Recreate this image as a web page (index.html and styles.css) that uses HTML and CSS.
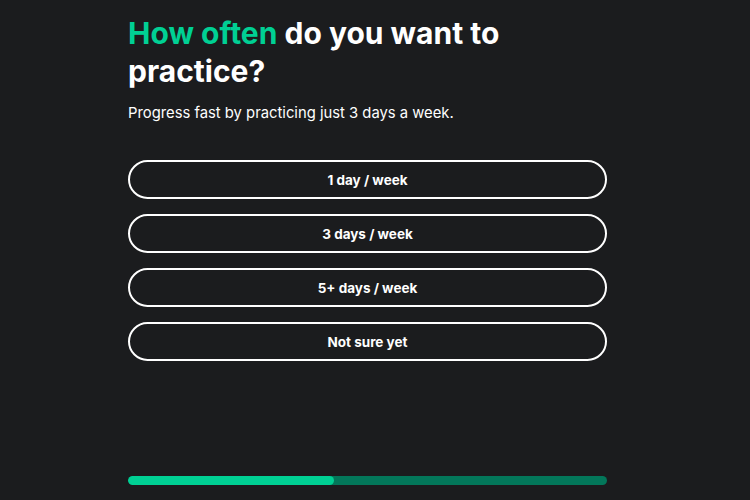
FILE: index.html
```html
<!DOCTYPE html>
<html lang="en">
<head>
<meta charset="utf-8">
<title>How often</title>
<link rel="stylesheet" href="styles.css">
</head>
<body>
<main class="page">
  <h1 class="title"><span class="accent">How often</span> do you want to practice?</h1>
  <p class="subtitle">Progress fast by practicing just 3 days a week.</p>
  <div class="options">
    <button class="option">1 day / week</button>
    <button class="option">3 days / week</button>
    <button class="option">5+ days / week</button>
    <button class="option">Not sure yet</button>
  </div>
  <div class="progress"><div class="progress-fill" style="width: 43%"></div></div>
</main>
</body>
</html>
```
FILE: styles.css
```css
html, body {
  margin: 0;
  padding: 0;
  background: #1b1c1e;
  height: 100%;
}
body {
  font-family: Inter, "Noto Sans", sans-serif;
  color: #ffffff;
}
.page {
  width: 479px;
  margin-left: 128px;
  padding-top: 14px;
  display: flex;
  flex-direction: column;
  height: 500px;
  box-sizing: border-box;
}
.title {
  margin: 0;
  font-size: 30px;
  line-height: 38px;
  font-weight: 700;
  letter-spacing: 0;
}
.accent {
  color: #00d094;
}
.subtitle {
  margin: 13px 0 0;
  font-size: 14.8px;
  line-height: 20px;
  font-weight: 400;
}
.options {
  margin-top: 37px;
  display: flex;
  flex-direction: column;
  gap: 15px;
}
.option {
  height: 39px;
  border: 2px solid #ffffff;
  border-radius: 20px;
  background: transparent;
  color: #ffffff;
  font-family: inherit;
  font-size: 13.5px;
  font-weight: 700;
  cursor: pointer;
}
.progress {
  margin-top: auto;
  margin-bottom: 15px;
  height: 9px;
  border-radius: 5px;
  background: #03775a;
  overflow: hidden;
}
.progress-fill {
  height: 100%;
  background: #00d094;
  border-radius: 5px;
}
```
